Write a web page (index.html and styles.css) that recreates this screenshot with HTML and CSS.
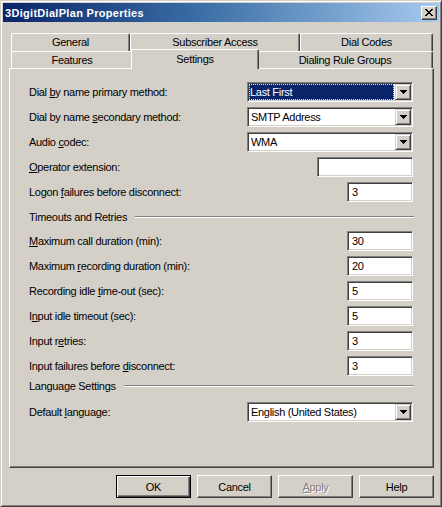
FILE: index.html
```html
<!DOCTYPE html>
<html>
<head>
<meta charset="utf-8">
<title>3DigitDialPlan Properties</title>
<link rel="stylesheet" href="styles.css">
</head>
<body>
<div class="window">
  <div class="titlebar">
    <span class="title">3DigitDialPlan Properties</span>
    <span class="close">
      <svg width="8" height="7" viewBox="0 0 8 7"><path fill="#000" d="M0 0h2v1h-2z M6 0h2v1h-2z M1 1h2v1h-2z M5 1h2v1h-2z M2 2h4v1h-4z M3 3h2v1h-2z M2 4h4v1h-4z M1 5h2v1h-2z M5 5h2v1h-2z M0 6h2v1h-2z M6 6h2v1h-2z"/></svg>
    </span>
  </div>
  <div class="client">
    <div class="tabs">
      <div class="tabrow back">
        <div class="tab w119">General</div>
        <div class="tab w170">Subscriber Access</div>
        <div class="tab w133">Dial Codes</div>
      </div>
      <div class="tabrow front">
        <div class="tab w122">Features</div>
        <div class="tab w124 selected">Settings</div>
        <div class="tab w176">Dialing Rule Groups</div>
      </div>
    </div>
    <div class="panel">
      <div class="form">
        <div class="row">
          <span class="label">Dial <u>b</u>y name primary method:</span>
          <div class="combo focused">
            <span class="value"><span class="sel">Last First</span></span>
            <span class="drop"><svg width="7" height="4" viewBox="0 0 7 4"><path d="M0 0h7v1h-1v1h-1v1h-1v1h-1v-1h-1v-1h-1v-1h-1z"/></svg></span>
          </div>
        </div>
        <div class="row">
          <span class="label">Dial by name <u>s</u>econdary method:</span>
          <div class="combo">
            <span class="value">SMTP Address</span>
            <span class="drop"><svg width="7" height="4" viewBox="0 0 7 4"><path d="M0 0h7v1h-1v1h-1v1h-1v1h-1v-1h-1v-1h-1v-1h-1z"/></svg></span>
          </div>
        </div>
        <div class="row">
          <span class="label">Audio <u>c</u>odec:</span>
          <div class="combo">
            <span class="value">WMA</span>
            <span class="drop"><svg width="7" height="4" viewBox="0 0 7 4"><path d="M0 0h7v1h-1v1h-1v1h-1v1h-1v-1h-1v-1h-1v-1h-1z"/></svg></span>
          </div>
        </div>
        <div class="row">
          <span class="label"><u>O</u>perator extension:</span>
          <div class="edit wide"></div>
        </div>
        <div class="row">
          <span class="label">Logon <u>f</u>ailures before disconnect:</span>
          <div class="edit">3</div>
        </div>
        <div class="section">
          <span class="label">Timeouts and Retries</span>
          <span class="rule"></span>
        </div>
        <div class="row">
          <span class="label"><u>M</u>aximum call duration (min):</span>
          <div class="edit">30</div>
        </div>
        <div class="row">
          <span class="label">Maximum <u>r</u>ecording duration (min):</span>
          <div class="edit">20</div>
        </div>
        <div class="row">
          <span class="label">Recording idle <u>t</u>ime-out (sec):</span>
          <div class="edit">5</div>
        </div>
        <div class="row">
          <span class="label">I<u>n</u>put idle timeout (sec):</span>
          <div class="edit">5</div>
        </div>
        <div class="row">
          <span class="label">Input r<u>e</u>tries:</span>
          <div class="edit">3</div>
        </div>
        <div class="row">
          <span class="label">Input failures before <u>d</u>isconnect:</span>
          <div class="edit">3</div>
        </div>
        <div class="section lang">
          <span class="label">Language Settings</span>
          <span class="rule"></span>
        </div>
        <div class="row after-lang">
          <span class="label">Default <u>l</u>anguage:</span>
          <div class="combo">
            <span class="value">English (United States)</span>
            <span class="drop"><svg width="7" height="4" viewBox="0 0 7 4"><path d="M0 0h7v1h-1v1h-1v1h-1v1h-1v-1h-1v-1h-1v-1h-1z"/></svg></span>
          </div>
        </div>
      </div>
    </div>
    <div class="buttons">
      <div class="btn default">OK</div>
      <div class="btn">Cancel</div>
      <div class="btn disabled"><u>A</u>pply</div>
      <div class="btn">Help</div>
    </div>
  </div>
</div>
</body>
</html>
```

FILE: styles.css
```css
html, body {
  margin: 0;
  padding: 0;
  background: #d4d0c8;
}

body {
  font-family: "Liberation Sans", Arial, sans-serif;
  font-size: 11px;
  letter-spacing: -0.3px;
  color: #000;
}

.window {
  box-sizing: border-box;
  width: 442px;
  height: 507px;
  padding: 2px;
  background: #d4d0c8;
  border: 1px solid;
  border-color: #d4d0c8 #404040 #404040 #d4d0c8;
  box-shadow: inset 1px 1px #fff, inset -1px -1px #808080;
  display: flex;
  flex-direction: column;
}

.titlebar {
  height: 19px;
  flex: none;
  display: flex;
  align-items: center;
  justify-content: space-between;
  padding: 0 2px 0 2px;
  background: linear-gradient(to right, #0a246a 0%, #3a6ea5 45%, #a6caf0 100%);
}

.title {
  color: #fff;
  font-weight: bold;
  font-size: 11px;
  letter-spacing: 0.3px;
}

.close {
  box-sizing: border-box;
  width: 16px;
  height: 14px;
  display: flex;
  align-items: center;
  justify-content: center;
  background: #d4d0c8;
  border: 1px solid;
  border-color: #fff #404040 #404040 #fff;
  box-shadow: inset -1px -1px #808080;
}

.client {
  flex: 1;
  display: flex;
  flex-direction: column;
  padding: 11px 5px 0 6px;
}

.tabs {
  height: 35px;
  padding: 0 1px 0 2px;
  flex: none;
}

.tabrow {
  display: flex;
  align-items: flex-start;
}

.tabrow.back {
  height: 18px;
}

.tabrow.front {
  height: 17px;
}

.tab {
  box-sizing: border-box;
  display: flex;
  align-items: center;
  justify-content: center;
  background: #d4d0c8;
  border-top: 1px solid #fff;
  border-left: 1px solid #fff;
  border-right: 1px solid #404040;
  box-shadow: inset -1px 0 #808080;
  border-radius: 2px 2px 0 0;
  white-space: nowrap;
}

.back .tab {
  height: 18px;
  padding-bottom: 1px;
}

.front .tab {
  height: 17px;
}

.w119 { width: 119px; }
.w170 { width: 170px; }
.w133 { width: 133px; }
.w122 { width: 122px; }
.w124 { width: 124px; }
.w176 { width: 176px; }

.tab.selected {
  width: 128px;
  height: 20px;
  margin: -2px -2px 0 -2px;
  padding-bottom: 2px;
  position: relative;
  z-index: 2;
}

.panel {
  box-sizing: border-box;
  height: 400px;
  flex: none;
  border: 1px solid;
  border-color: #fff #404040 #404040 #fff;
  box-shadow: inset -1px -1px #808080;
  padding: 13px 20px 0 19px;
}

.form {
  display: flex;
  flex-direction: column;
  gap: 5px;
}

.row {
  height: 20px;
  display: flex;
  align-items: center;
  justify-content: space-between;
}

.label {
  white-space: nowrap;
}

.section {
  height: 19px;
  display: flex;
  align-items: center;
}

.section.lang {
  height: 10px;
}

.row.after-lang {
  margin-top: 6px;
}

.rule {
  flex: 1;
  height: 0;
  border-top: 1px solid #808080;
  border-bottom: 1px solid #fff;
  margin-left: 8px;
  margin-right: -1px;
}

.combo, .edit {
  box-sizing: border-box;
  height: 20px;
  background: #fff;
  border: 1px solid;
  border-color: #808080 #fff #fff #808080;
  box-shadow: inset 1px 1px #404040, inset -1px -1px #d4d0c8;
}

.combo {
  width: 166px;
  display: flex;
  padding: 1px;
}

.combo .value {
  flex: 1;
  display: flex;
  align-items: center;
  padding-left: 2px;
  white-space: nowrap;
}

.combo.focused .value {
  padding: 0;
}

.sel {
  flex: 1;
  align-self: stretch;
  display: flex;
  align-items: center;
  padding-left: 1px;
  margin-right: 1px;
  background: #0a246a;
  color: #fff;
  outline: 1px dotted #e8e8a0;
  outline-offset: -1px;
}

.drop {
  box-sizing: border-box;
  width: 16px;
  height: 16px;
  display: flex;
  align-items: center;
  justify-content: center;
  background: #d4d0c8;
  border: 1px solid;
  border-color: #d4d0c8 #404040 #404040 #d4d0c8;
  box-shadow: inset 1px 1px #fff, inset -1px -1px #808080;
}

.edit {
  width: 66px;
  padding: 0 0 0 4px;
  display: flex;
  align-items: center;
}

.edit.wide {
  width: 96px;
}

.buttons {
  display: flex;
  justify-content: flex-end;
  gap: 6px;
  margin-top: 7px;
}

.btn {
  box-sizing: border-box;
  width: 75px;
  height: 23px;
  display: flex;
  align-items: center;
  justify-content: center;
  background: #d4d0c8;
  border: 1px solid;
  border-color: #fff #404040 #404040 #fff;
  box-shadow: inset -1px -1px #808080;
}

.btn.default {
  border-color: #000;
  box-shadow: inset 1px 1px #fff, inset -1px -1px #404040, inset -2px -2px #808080;
}

.btn.disabled {
  color: #808080;
  text-shadow: 1px 1px #fff;
}
```
